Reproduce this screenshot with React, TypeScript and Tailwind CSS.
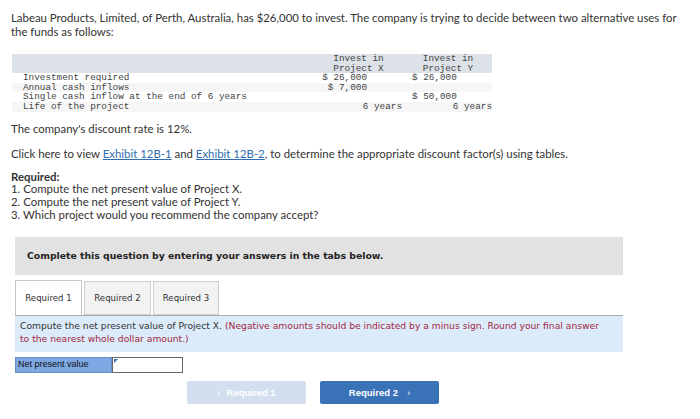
import React from "react";

const body = "font-['Lato','Open_Sans',sans-serif]";
const mono = "font-['Liberation_Mono','Courier_New',monospace]";
const verdana = "font-['DejaVu_Sans','Verdana',sans-serif]";

type Row = { label: string; x?: string; y?: string; xYears?: boolean; yYears?: boolean };

const rows: Row[] = [
  { label: "Investment required", x: "$ 26,000", y: "$ 26,000" },
  { label: "Annual cash inflows", x: "$ 7,000" },
  { label: "Single cash inflow at the end of 6 years", y: "$ 50,000" },
  { label: "Life of the project", x: "6 years", y: "6 years", xYears: true, yYears: true },
];

function DataTable() {
  return (
    <div className={`${mono} text-[9.33px] leading-[9.6px] text-[#444] w-[480px] mt-[15px] ml-[1px]`}>
      {/* header band */}
      <div className="flex h-[19px] bg-[#dde1e8] whitespace-pre">
        <div className="w-[310px]" />
        <div className="w-[80px] text-center pr-[7px]">
          <div>Invest in</div>
          <div>Project X</div>
        </div>
        <div className="w-[10px]" />
        <div className="w-[80px] text-center pr-[8px]">
          <div>Invest in</div>
          <div>Project Y</div>
        </div>
      </div>
      {rows.map((r, i) => (
        <div
          key={r.label}
          className={`flex h-[9.7px] whitespace-pre ${i % 2 === 1 ? "bg-[#f6f6f6]" : "bg-white"}`}
        >
          <div className="w-[310px] pl-[11px]">{r.label}</div>
          <div className={`w-[80px] text-right ${r.xYears ? "" : "pr-[35px]"}`}>{r.x ?? ""}</div>
          <div className="w-[10px]" />
          <div className={`w-[80px] text-right ${r.yYears ? "" : "pr-[36px]"}`}>{r.y ?? ""}</div>
        </div>
      ))}
    </div>
  );
}

export default function App() {
  return (
    <div className="w-[700px] h-[419px] bg-white overflow-hidden">
      <div className={`${body} text-[11.4px] leading-[14px] text-[#333] pl-[11px] pt-[11px]`}>
        <p className="w-[674px]">
          Labeau Products, Limited, of Perth, Australia, has $26,000 to invest. The company is trying to decide between two alternative uses for the funds as follows:
        </p>

        <DataTable />

        <p className="mt-[10px]">The company's discount rate is 12%.</p>

        <p className="mt-[11px]">
          Click here to view{" "}
          <span className="text-[#2f6db0] underline">Exhibit 12B-1</span> and{" "}
          <span className="text-[#2f6db0] underline">Exhibit 12B-2</span>, to determine the appropriate discount factor(s) using tables.
        </p>

        <div className="mt-[10px] leading-[12.6px]">
          <p className="font-bold">Required:</p>
          <p>1. Compute the net present value of Project X.</p>
          <p>2. Compute the net present value of Project Y.</p>
          <p>3. Which project would you recommend the company accept?</p>
        </div>
      </div>

      <div className="ml-[15px] w-[608px] mt-[16px]">
        {/* instruction banner */}
        <div className={`${verdana} h-[38px] bg-[#e2e2e2] flex items-center pl-[12px] text-[9.3px] font-bold text-[#222]`}>
          Complete this question by entering your answers in the tabs below.
        </div>

        {/* tabs */}
        <div className={`${verdana} flex items-end gap-[2px] mt-[5px] h-[35px] text-[8.6px] text-[#333]`}>
          <div className="w-[67px] h-[35px] bg-white border border-b-0 border-[#c8c8c8] flex items-center justify-center">
            Required 1
          </div>
          <div className="w-[67px] h-[34px] bg-[#f2f2f2] border border-[#cfcfcf] flex items-center justify-center">
            Required 2
          </div>
          <div className="w-[66px] h-[34px] bg-[#f2f2f2] border border-[#cfcfcf] flex items-center justify-center">
            Required 3
          </div>
        </div>

        {/* answer instructions */}
        <div className={`${verdana} bg-[#dcebf9] border-t border-[#a3abb3] h-[37px] pl-[5px] pr-[20px] pt-[3px] text-[9.2px] leading-[13px] text-[#333]`}>
          Compute the net present value of Project X.{" "}
          <span className="text-[#a3283f]">
            (Negative amounts should be indicated by a minus sign. Round your final answer to the nearest whole dollar amount.)
          </span>
        </div>

        {/* answer row */}
        <div className="flex mt-[5px] h-[16px] font-['Liberation_Sans','Arial',sans-serif] text-[9px]">
          <div className="w-[97px] bg-[#7ea8e4] border border-[#6b8fc2] flex items-center pl-[2px] text-[#111]">
            Net present value
          </div>
          <div className="relative w-[71px] bg-white border border-[#666]">
            <span className="absolute left-[1px] top-[1px] w-0 h-0 border-t-[4px] border-r-[4px] border-t-[#3b6fc0] border-r-transparent" />
          </div>
        </div>

        {/* navigation */}
        <div className="flex gap-[14px] mt-[8px] ml-[172px] font-['Liberation_Sans','Arial',sans-serif] text-[9.5px] font-bold text-white">
          <div className="w-[119px] h-[23px] rounded-[2px] bg-[#d3dfee] flex items-center justify-center gap-[6px]">
            <span className="font-normal">‹</span>
            <span>Required 1</span>
          </div>
          <div className="w-[119px] h-[23px] rounded-[2px] bg-[#3a72b8] flex items-center justify-center gap-[9px]">
            <span>Required 2</span>
            <span className="font-normal">›</span>
          </div>
        </div>
      </div>
    </div>
  );
}
